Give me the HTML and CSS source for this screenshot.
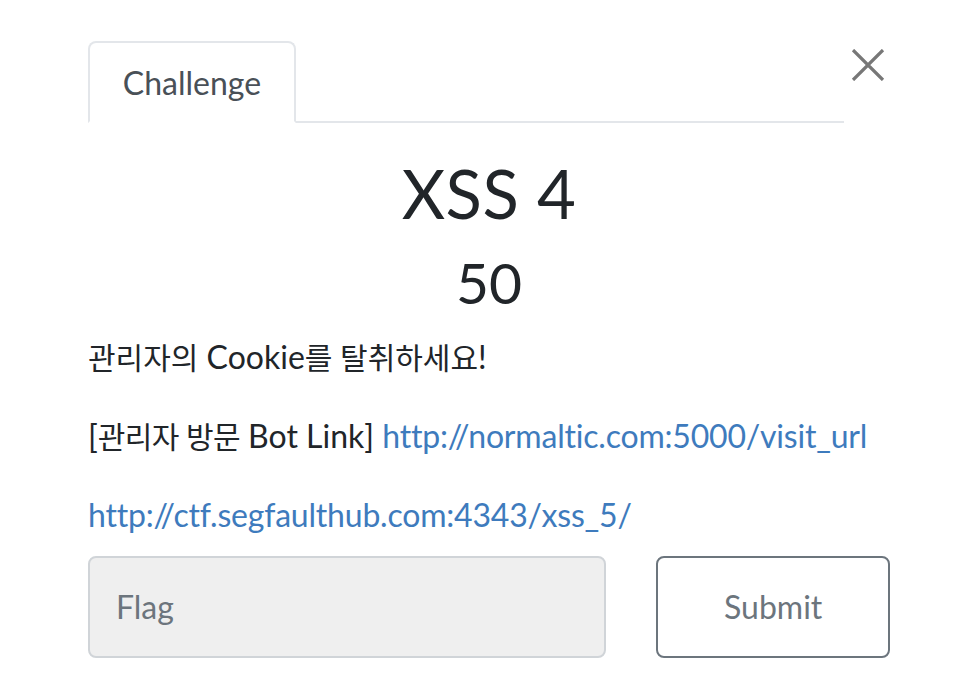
FILE: index.html
```html
<!DOCTYPE html>
<html lang="ko">
<head>
<meta charset="utf-8">
<title>Challenge</title>
<link rel="stylesheet" href="styles.css">
</head>
<body>
<div class="modal">
  <div class="header">
    <ul class="tabs">
      <li class="tab active">Challenge</li>
    </ul>
    <button class="close" aria-label="Close">
      <svg width="34" height="32" viewBox="0 0 34 32"><path d="M2 1 L32 31 M32 1 L2 31" stroke="#777" stroke-width="3.2" fill="none"/></svg>
    </button>
  </div>
  <h3 class="name">XSS 4</h3>
  <h4 class="value">50</h4>
  <div class="desc">
    <p><span class="ko">관리자의</span> Cookie<span class="ko">를 탈취하세요</span>!</p>
    <p>[<span class="ko tight">관리자 방문</span> Bot Link] <a href="#">http://normaltic.com:5000/visit_url</a></p>
    <p><a href="#">http://ctf.segfaulthub.com:4343/xss_5/</a></p>
  </div>
  <form class="submit-row">
    <input class="flag" type="text" placeholder="Flag">
    <button type="button" class="submit">Submit</button>
  </form>
</div>
</body>
</html>
```
FILE: styles.css
```css
html, body {
  margin: 0;
  padding: 0;
  background: #fff;
}
body {
  font-family: Lato, "Noto Sans CJK KR", sans-serif;
  color: #212529;
}
.modal {
  width: 802px;
  padding: 41px 0 0 88px;
}
.header {
  display: flex;
  align-items: flex-start;
}
.tabs {
  flex: 1;
  list-style: none;
  margin: 0;
  padding: 0;
  display: flex;
  border-bottom: 2px solid #e3e6ea;
  height: 80px;
}
.tab {
  box-sizing: border-box;
  width: 208px;
  height: 82px;
  border: 2px solid #e3e6ea;
  border-bottom-color: #fff;
  border-radius: 8px 8px 0 0;
  font-size: 32px;
  color: #495057;
  display: flex;
  align-items: center;
  justify-content: center;
  background: #fff;
}
.close {
  width: 46px;
  height: 40px;
  border: 0;
  background: none;
  padding: 8px 0 0 7px;
  margin: 0;
  display: flex;
}
.name {
  margin: 32px 0 0;
  font-size: 67px;
  font-weight: 400;
  line-height: 1.15;
  text-align: center;
  letter-spacing: 0.5px;
}
.value {
  margin: 18px 0 0;
  font-size: 57px;
  font-weight: 400;
  line-height: 1.15;
  text-align: center;
}
.desc {
  margin-top: 20px;
}
.desc p {
  margin: 0 0 37px;
  font-size: 32px;
  line-height: 42px;
}
.desc p:last-child {
  margin-bottom: 0;
}
.ko {
  font-size: 30px;
}
.ko.tight {
  letter-spacing: -0.6px;
}
.desc a {
  color: #3e7bbd;
  text-decoration: none;
  letter-spacing: -0.2px;
}
.submit-row {
  display: flex;
  gap: 50px;
  margin-top: 20px;
}
.flag {
  box-sizing: border-box;
  width: 519px;
  height: 102px;
  background: #efefef;
  border: 2px solid #d0d4d8;
  border-radius: 8px;
  padding: 0 26px;
  font-family: Lato, sans-serif;
  font-size: 32px;
  color: #495057;
}
.flag::placeholder {
  color: #6c757d;
}
.submit {
  box-sizing: border-box;
  width: 234px;
  height: 102px;
  background: #fff;
  border: 2px solid #6c757d;
  border-radius: 8px;
  font-family: Lato, sans-serif;
  font-size: 32px;
  color: #6c757d;
}
```
